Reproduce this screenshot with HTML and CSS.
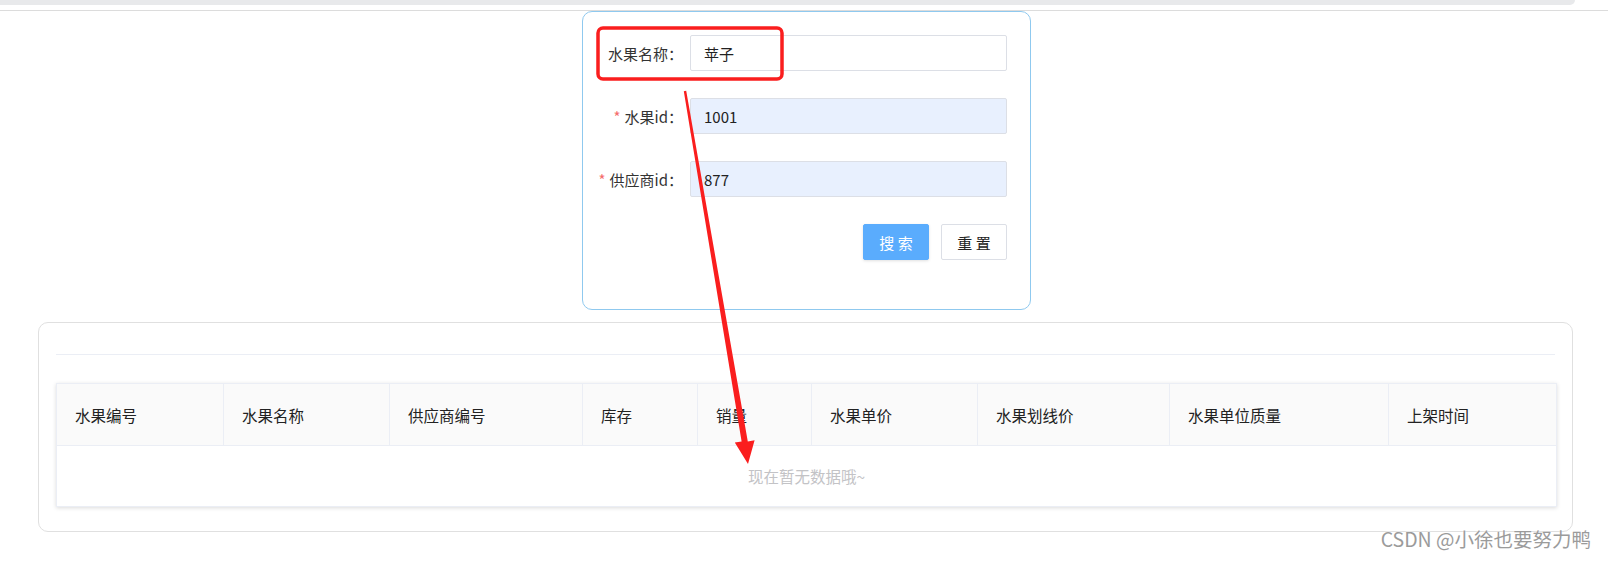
FILE: index.html
```html
<!DOCTYPE html>
<html lang="zh-CN">
<head>
  <meta charset="UTF-8">
  <title>水果查询</title>
  <link rel="stylesheet" href="styles.css">
</head>
<body>

  <div class="topbar"></div>

  <div class="page">
    <div class="search-card">
      <div class="form-item">
        <label class="form-label">水果名称：</label>
        <input class="form-input" type="text" value="苹子">
      </div>
      <div class="form-item">
        <label class="form-label"><span class="required">*</span>水果id：</label>
        <input class="form-input filled" type="text" value="1001">
      </div>
      <div class="form-item">
        <label class="form-label"><span class="required">*</span>供应商id：</label>
        <input class="form-input filled" type="text" value="877">
      </div>
      <div class="form-actions">
        <button class="btn btn-primary">搜 索</button>
        <button class="btn">重 置</button>
      </div>
    </div>

    <div class="table-card">
      <div class="table-divider"></div>
      <table class="fruit-table">
        <colgroup>
          <col class="col-1"><col class="col-2"><col class="col-3">
          <col class="col-4"><col class="col-5"><col class="col-6">
          <col class="col-7"><col class="col-8"><col class="col-9">
        </colgroup>
        <thead>
          <tr>
            <th>水果编号</th>
            <th>水果名称</th>
            <th>供应商编号</th>
            <th>库存</th>
            <th>销量</th>
            <th>水果单价</th>
            <th>水果划线价</th>
            <th>水果单位质量</th>
            <th>上架时间</th>
          </tr>
        </thead>
        <tbody>
          <tr>
            <td class="empty" colspan="9">现在暂无数据哦~</td>
          </tr>
        </tbody>
      </table>
    </div>
  </div>

  <div class="watermark">CSDN @小徐也要努力鸭</div>

  <!-- screenshot annotation: red box + arrow -->
  <svg class="annotation" width="1608" height="561" viewBox="0 0 1608 561">
    <rect x="598" y="28" width="184" height="51" rx="5" fill="none" stroke="#fa1e1e" stroke-width="3.5"/>
    <polygon fill="#fa1e1e" points="683.8,91.3 741.6,441.4 734.8,442.6 748,464 754.6,440.3 747.8,441.4 686.2,90.7"/>
  </svg>

</body>
</html>
```

FILE: styles.css
```css
body {
  margin: 0;
  background-color: #fff;
  font-family: "Noto Sans CJK SC", "Noto Sans", sans-serif;
  font-size: 15px;
  color: #333;
  position: relative;
  height: 561px;
  overflow: hidden;
}

.topbar {
  width: 1575px;
  height: 5px;
  background-color: #e8e9eb;
  border-bottom-right-radius: 6px;
}

.page {
  margin-top: 5px;
  border-top: 1px solid #dcdcdc;
}

.search-card {
  width: 421px;
  margin-left: 582px;
  border: 1px solid #8fc9ef;
  border-radius: 10px;
  padding: 23px 23px 49px 3px;
}

.form-item {
  display: flex;
  align-items: center;
  height: 36px;
  margin-bottom: 27px;
}

.form-label {
  width: 104px;
  padding-right: 7px;
  box-sizing: border-box;
  text-align: right;
  color: #333;
  white-space: nowrap;
}

.required {
  color: #f56c6c;
  margin-right: 4px;
}

.form-input {
  flex: 1;
  height: 36px;
  box-sizing: border-box;
  border: 1px solid #dcdfe6;
  border-radius: 2px;
  padding: 0 13px;
  font-family: inherit;
  font-size: 15px;
  color: #222;
  background-color: #fff;
  outline: none;
}

.form-input.filled {
  background-color: #e8f0fe;
}

.form-actions {
  display: flex;
  justify-content: flex-end;
  gap: 12px;
  height: 36px;
}

.btn {
  width: 66px;
  height: 36px;
  border: 1px solid #dcdfe6;
  border-radius: 2px;
  background-color: #fff;
  color: #222;
  font-family: inherit;
  font-size: 15px;
  cursor: pointer;
}

.btn-primary {
  background-color: #5aacfd;
  border-color: #5aacfd;
  color: #fff;
  box-shadow: 0 1px 3px rgba(0, 0, 0, 0.12);
}

.table-card {
  width: 1499px;
  margin: 12px 0 0 38px;
  border: 1px solid #e0e0e0;
  border-radius: 10px;
  padding: 31px 17px 24px 17px;
}

.table-divider {
  border-top: 1px solid #ebeef5;
  margin-bottom: 28px;
}

.fruit-table {
  width: 1500px;
  table-layout: fixed;
  border-collapse: collapse;
  border: 1px solid #ebeef5;
  box-shadow: 0 1px 4px rgba(0, 0, 0, 0.14);
}

.col-1 { width: 167px; }
.col-2 { width: 166px; }
.col-3 { width: 193px; }
.col-4 { width: 115px; }
.col-5 { width: 114px; }
.col-6 { width: 166px; }
.col-7 { width: 192px; }
.col-8 { width: 219px; }
.col-9 { width: 168px; }

.fruit-table th {
  height: 61px;
  padding: 0 0 0 18px;
  text-align: left;
  font-weight: normal;
  font-size: 15.5px;
  color: #222;
  background-color: #fafafa;
  border-right: 1px solid #ebeef5;
  border-bottom: 1px solid #ebeef5;
}

.fruit-table th:last-child {
  border-right: none;
}

.empty {
  height: 60px;
  text-align: center;
  font-size: 15.5px;
  color: #c3c3c6;
  padding: 0;
}

.watermark {
  position: absolute;
  right: 17px;
  top: 527px;
  font-size: 19.5px;
  line-height: 24px;
  color: #9b9b9b;
  text-shadow: 0 0 2px #fff;
}

.annotation {
  position: absolute;
  top: 0;
  left: 0;
  pointer-events: none;
}
```
